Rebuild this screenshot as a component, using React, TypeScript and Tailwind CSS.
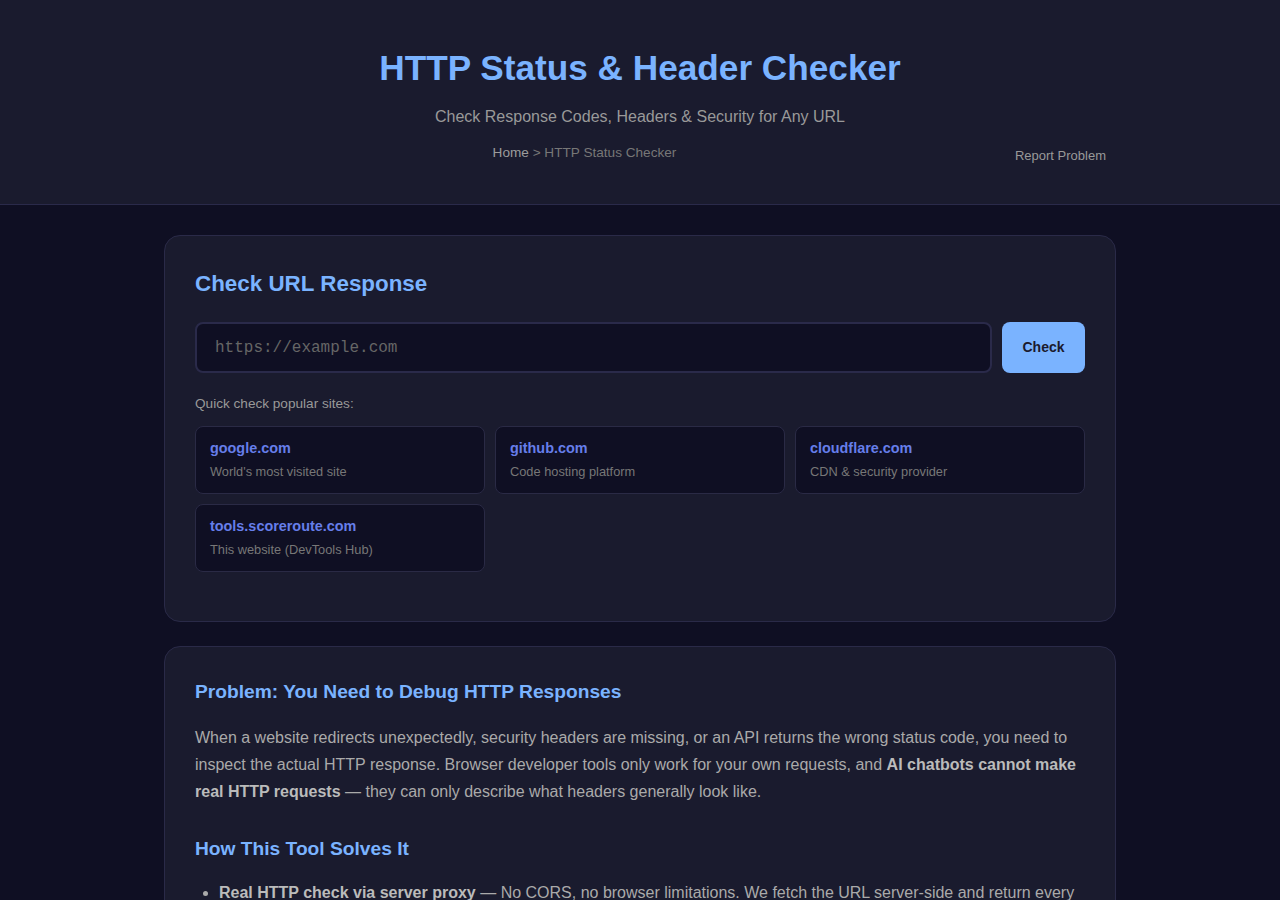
import type { ReactNode } from "react";

// Página de la herramienta: cabecera con título + breadcrumb, tarjeta de
// consulta con sitios rápidos y una tarjeta de contenido explicativo.

type QuickSite = { domain: string; desc: string };

const quickSites: QuickSite[] = [
  { domain: "google.com", desc: "World's most visited site" },
  { domain: "github.com", desc: "Code hosting platform" },
  { domain: "cloudflare.com", desc: "CDN & security provider" },
  { domain: "tools.scoreroute.com", desc: "This website (DevTools Hub)" },
];

function Card({ children }: { children: ReactNode }) {
  return (
    <section className="rounded-2xl border border-[#2a2a48] bg-[#1a1b2e] p-[30px]">
      {children}
    </section>
  );
}

export default function App() {
  return (
    <div className="min-h-screen bg-[#0f0f23] font-['Liberation_Sans',Arial,sans-serif]">
      {/* Header */}
      <header className="h-[205px] border-b border-[#2a2a4a] bg-[#1a1b2e] pt-[45px] text-center">
        <h1 className="text-[35.2px] font-bold leading-[46px] text-[#7ab3ff]">
          HTTP Status &amp; Header Checker
        </h1>
        <p className="mt-[16px] text-[16px] leading-[20px] text-[#999]">
          Check Response Codes, Headers &amp; Security for Any URL
        </p>
        <div className="mx-auto mt-[16px] flex w-[952px] items-start">
          <nav className="flex-1 text-center text-[13.6px] leading-[20px]">
            <a className="text-[#9c9c9c]">Home</a>
            <span className="text-[#777]"> &gt; HTTP Status Checker</span>
          </nav>
          <button className="mt-[3px] px-[10px] text-[13px] leading-[20px] text-[#999]">
            Report Problem
          </button>
        </div>
      </header>

      <main className="mx-auto flex w-[952px] flex-col gap-[24px] pt-[30px] pb-10">
        {/* Checker */}
        <Card>
          <h2 className="mt-[2px] text-[22.4px] font-bold leading-[32px] text-[#7ab3ff]">
            Check URL Response
          </h2>
          <div className="mt-[22px] flex gap-[10px]">
            <input
              placeholder="https://example.com"
              className="h-[51px] flex-1 rounded-lg border-2 border-[#2a2a4a] bg-[#0f0f23] px-[18px] font-['Liberation_Mono',monospace] text-[16px] text-[#ddd] outline-none placeholder:text-[#666]"
            />
            <button className="h-[51px] w-[83px] rounded-lg bg-[#7ab3ff] text-[14px] font-bold text-[#1a1a2e]">
              Check
            </button>
          </div>
          <p className="mt-[22px] text-[13.6px] leading-[18px] text-[#999]">
            Quick check popular sites:
          </p>
          <div className="mt-[13px] mb-[19px] grid grid-cols-3 gap-[10px]">
            {quickSites.map((s) => (
              <div
                key={s.domain}
                className="h-[68px] cursor-pointer rounded-lg border border-[#2a2a45] bg-[#0f0f23] px-[14px] pt-[11px]"
              >
                <div className="text-[14.4px] font-bold leading-[20px] text-[#667eea]">
                  {s.domain}
                </div>
                <div className="mt-[6px] text-[12.8px] leading-[16px] text-[#777]">
                  {s.desc}
                </div>
              </div>
            ))}
          </div>
        </Card>

        {/* Contenido */}
        <Card>
          <h2 className="mt-[1px] text-[19.2px] font-bold leading-[28px] text-[#7ab3ff]">
            Problem: You Need to Debug HTTP Responses
          </h2>
          <p className="mt-[18px] text-[16px] leading-[27px] text-[#aaa]">
            When a website redirects unexpectedly, security headers are missing, or
            an API returns the wrong status code, you need to inspect the actual
            HTTP response. Browser developer tools only work for your own requests,
            and <strong className="text-[#bbb]">AI chatbots cannot make real HTTP requests</strong>{" "}
            — they can only describe what headers generally look like.
          </p>
          <h3 className="mt-[30px] text-[19.2px] font-bold leading-[28px] text-[#7ab3ff]">
            How This Tool Solves It
          </h3>
          <ul className="mt-[16px] list-disc pl-[24px] text-[16px] leading-[27px] text-[#aaa]">
            <li>
              <strong className="text-[#bbb]">Real HTTP check via server proxy</strong> —
              No CORS, no browser limitations. We fetch the URL server-side and return
              every header exactly as the server sent it.
            </li>
            <li>
              <strong className="text-[#bbb]">Security header audit</strong> — See which
              protective headers are present and which are missing.
            </li>
          </ul>
        </Card>
      </main>
    </div>
  );
}
